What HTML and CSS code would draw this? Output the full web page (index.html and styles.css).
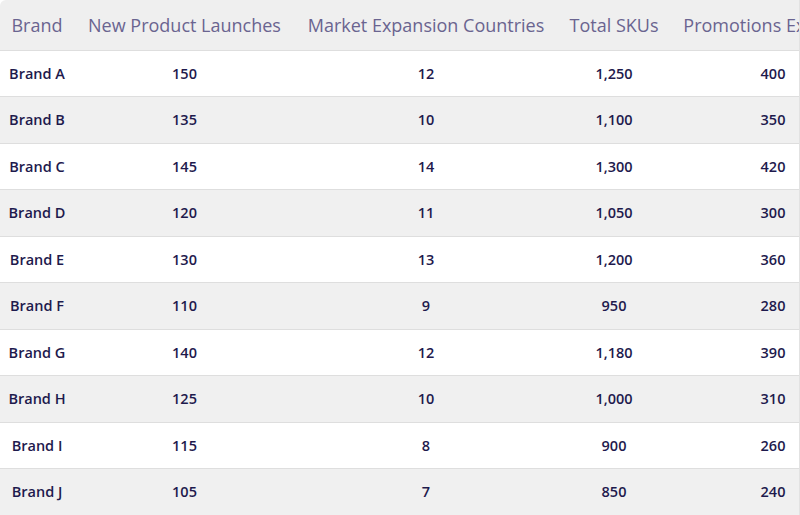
FILE: index.html
```html
<!DOCTYPE html>
<html lang="en">
<head>
<meta charset="utf-8">
<title>Brand Metrics</title>
<link rel="stylesheet" href="styles.css">
</head>
<body>
<div class="table-wrap">
  <table class="data-table">
    <colgroup>
      <col class="c1"><col class="c2"><col class="c3"><col class="c4"><col class="c5">
    </colgroup>
    <thead>
      <tr>
        <th>Brand</th>
        <th>New Product Launches</th>
        <th>Market Expansion Countries</th>
        <th>Total SKUs</th>
        <th>Promotions Executed</th>
      </tr>
    </thead>
    <tbody>
      <tr><td>Brand A</td><td>150</td><td>12</td><td>1,250</td><td>400</td></tr>
      <tr><td>Brand B</td><td>135</td><td>10</td><td>1,100</td><td>350</td></tr>
      <tr><td>Brand C</td><td>145</td><td>14</td><td>1,300</td><td>420</td></tr>
      <tr><td>Brand D</td><td>120</td><td>11</td><td>1,050</td><td>300</td></tr>
      <tr><td>Brand E</td><td>130</td><td>13</td><td>1,200</td><td>360</td></tr>
      <tr><td>Brand F</td><td>110</td><td>9</td><td>950</td><td>280</td></tr>
      <tr><td>Brand G</td><td>140</td><td>12</td><td>1,180</td><td>390</td></tr>
      <tr><td>Brand H</td><td>125</td><td>10</td><td>1,000</td><td>310</td></tr>
      <tr><td>Brand I</td><td>115</td><td>8</td><td>900</td><td>260</td></tr>
      <tr><td>Brand J</td><td>105</td><td>7</td><td>850</td><td>240</td></tr>
    </tbody>
  </table>
</div>
</body>
</html>
```
FILE: styles.css
```css
html, body {
  margin: 0;
  padding: 0;
  background: #ffffff;
  overflow: hidden;
}
body {
  font-family: "Open Sans", "DejaVu Sans", sans-serif;
  width: 800px;
  height: 515px;
}
.table-wrap {
  width: 800px;
  height: 515px;
  overflow: hidden;
  border-right: 1px solid #e2e2e2;
  box-sizing: border-box;
  border-top-left-radius: 6px;
}
.data-table {
  border-collapse: collapse;
  table-layout: fixed;
  width: 875px;
}
.c1 { width: 74px; }
.c2 { width: 221px; }
.c3 { width: 262px; }
.c4 { width: 114px; }
.c5 { width: 204px; }
.data-table th {
  height: 50px;
  padding: 0;
  background: #efefef;
  color: #6a6490;
  font-weight: 400;
  font-size: 18px;
  white-space: nowrap;
  text-align: center;
  border-bottom: 1px solid #dedede;
  box-sizing: border-box;
}
.data-table td {
  height: 46.5px;
  padding: 0;
  text-align: center;
  color: #1e1a4d;
  font-size: 14.5px;
  font-weight: 600;
  border-bottom: 1px solid #dedede;
  box-sizing: border-box;
}
.data-table tbody tr:nth-child(even) td {
  background: #f0f0f0;
}
.data-table tbody tr:nth-child(odd) td {
  background: #ffffff;
}
```
